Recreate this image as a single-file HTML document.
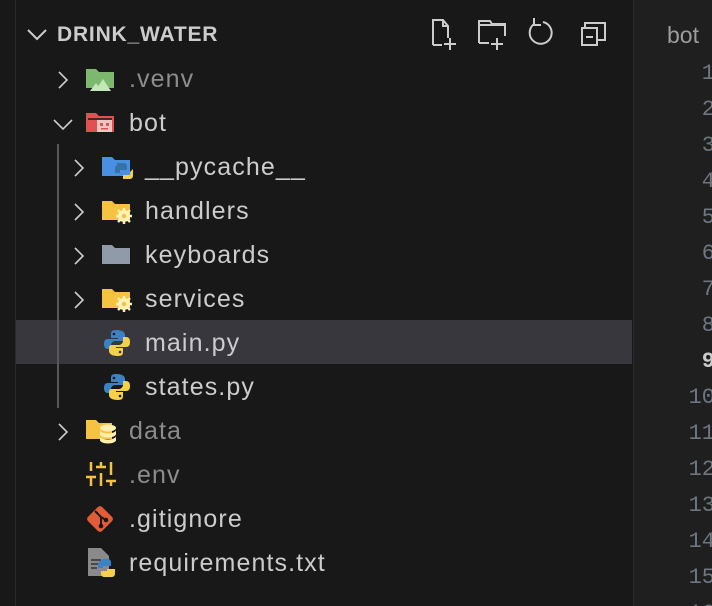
<!DOCTYPE html>
<html><head><style>
body{margin:0;width:712px;height:606px;background:#181818;overflow:hidden;font-family:"Liberation Sans",sans-serif;position:relative}
.side{position:absolute;left:0;top:0;width:632px;height:606px;background:#181818}
.lb{position:absolute;left:15px;top:0;width:1px;height:606px;background:#2b2b2b}
.ed{position:absolute;left:633px;top:0;width:79px;height:606px;background:#1f1f1f;border-left:1px solid #2b2b2b}
.row{position:absolute;left:16px;width:616px;height:44px}
.t{position:absolute;top:0;line-height:46px;font-size:25px;letter-spacing:1.1px;color:#cccccc;white-space:nowrap}
.dim{color:#8c8c8c}
.ch{position:absolute;top:14px}
.ln{position:absolute;right:-3px;font-family:"Liberation Mono",monospace;font-size:22px;line-height:24px;color:#6e7681;text-align:right}
</style></head><body>
<div class="side"></div>
<div class="lb"></div>
<div class="row" style="top:320px;background:#37373d"></div>
<div style="position:absolute;left:57px;top:144px;width:2px;height:264px;background:#585858"></div>
<svg style="position:absolute;left:26px;top:26px" width="22" height="16"><path d="M2 4 L11 13 L20 4" stroke="#ccc" stroke-width="2" fill="none"/></svg>
<div style="position:absolute;left:57px;top:21px;font-size:21px;letter-spacing:0.8px;font-weight:bold;color:#cccccc;line-height:28px">DRINK_WATER</div>
<svg style="position:absolute;left:430px;top:18px" width="200" height="34" fill="none" stroke="#ccc" stroke-width="2">
<path d="M3 27 V2 H13 L18 8 V20 M13 2 V8 H18 M3 27 H12 M20 20 V32 M14 26 H26"/>
<path d="M49 25 V3 H60 L62 6 H75 V18 M49 7 H75 M49 25 H59 M67 20 V32 M61 26 H73"/>
<path d="M104 6 A11 11 0 1 0 113 4"/>
<path d="M104 0 V7 H111"/>
<path d="M152 10 V27 H167 V10 Z M155 10 V5 H175 V22 H167 M156 19 H163"/>
</svg>
<svg class="ch" style="left:56px;top:70px" width="14" height="20"><path d="M3 2 L11 10 L3 18" stroke="#ccc" stroke-width="1.6" fill="none"/></svg>
<svg style="position:absolute;left:86px;top:67px" width="30" height="24"><path d="M0 2 H10 L13 5 H28 V21 H0 Z" fill="#7cb86e"/><path d="M9 24 L17 12 L25 24 Z M4 24 L10 16 L16 24Z" fill="#c5e6b8"/></svg>
<div class="t dim" style="left:129px;top:56px">.venv</div>

<svg class="ch" style="left:52px;top:117px" width="22" height="16"><path d="M2 3 L11 12 L20 3" stroke="#ccc" stroke-width="1.6" fill="none"/></svg>
<svg style="position:absolute;left:86px;top:111px" width="31" height="24"><path d="M0 2 H10 L13 5 H28 V21 H0 Z" fill="#e05252"/><path d="M2 8 H26" stroke="#181818" stroke-width="1.5"/><rect x="11" y="9" width="15" height="12" fill="#f2c4c4"/><rect x="14" y="12" width="3" height="3" fill="#e05252"/><rect x="20" y="12" width="3" height="3" fill="#e05252"/><rect x="15" y="17" width="7" height="1.5" fill="#e05252"/></svg>
<div class="t" style="left:129px;top:100px">bot</div>

<svg class="ch" style="left:72px;top:158px" width="14" height="20"><path d="M3 2 L11 10 L3 18" stroke="#ccc" stroke-width="1.6" fill="none"/></svg>
<svg style="position:absolute;left:102px;top:155px" width="31" height="26"><path d="M0 2 H10 L13 5 H28 V21 H0 Z" fill="#4a90e2"/><path d="M14 8 h8 a3 3 0 0 1 3 3 v4 h-7 v3 h-5 v-5 a3 3 0 0 1 3-3z" fill="#3572a5"/><path d="M31 14 v7 a3 3 0 0 1 -3 3 h-7 v-4 h7 v-3z" fill="#f4d04b"/></svg>
<div class="t" style="left:145px;top:144px">__pycache__</div>

<svg class="ch" style="left:72px;top:202px" width="14" height="20"><path d="M3 2 L11 10 L3 18" stroke="#ccc" stroke-width="1.6" fill="none"/></svg>
<svg style="position:absolute;left:102px;top:199px" width="31" height="26"><path d="M0 2 H10 L13 5 H28 V21 H0 Z" fill="#f5c242"/><circle cx="22" cy="17" r="6" fill="#fff2b3"/><path d="M22 9 V25 M14 17 H30 M16 11 L28 23 M28 11 L16 23" stroke="#fff2b3" stroke-width="2.5"/><circle cx="22" cy="17" r="2.2" fill="#f5c242"/></svg>
<div class="t" style="left:145px;top:188px">handlers</div>

<svg class="ch" style="left:72px;top:246px" width="14" height="20"><path d="M3 2 L11 10 L3 18" stroke="#ccc" stroke-width="1.6" fill="none"/></svg>
<svg style="position:absolute;left:102px;top:243px" width="31" height="26"><path d="M0 2 H10 L13 5 H28 V21 H0 Z" fill="#8f9ba8"/></svg>
<div class="t" style="left:145px;top:232px">keyboards</div>

<svg class="ch" style="left:72px;top:290px" width="14" height="20"><path d="M3 2 L11 10 L3 18" stroke="#ccc" stroke-width="1.6" fill="none"/></svg>
<svg style="position:absolute;left:102px;top:287px" width="31" height="26"><path d="M0 2 H10 L13 5 H28 V21 H0 Z" fill="#f5c242"/><circle cx="22" cy="17" r="6" fill="#fff2b3"/><path d="M22 9 V25 M14 17 H30 M16 11 L28 23 M28 11 L16 23" stroke="#fff2b3" stroke-width="2.5"/><circle cx="22" cy="17" r="2.2" fill="#f5c242"/></svg>
<div class="t" style="left:145px;top:276px">services</div>

<svg style="position:absolute;left:103px;top:329px" width="28" height="28"><path d="M13 1 C8 1 8 3 8 6 v3 h7 v1 H5 C2 10 1 12 1 15 c0 3 1 5 4 5 h3 v-4 c0-2 2-4 4-4 h7 c2 0 3-1 3-3 V6 c0-3-3-5-9-5z" fill="#3b82c4"/><path d="M15 27 c5 0 5-2 5-5 v-3 h-7 v-1 h10 c3 0 4-2 4-5 c0-3-1-5-4-5 h-3 v4 c0 2-2 4-4 4 h-7 c-2 0-3 1-3 3 v3 c0 3 3 5 9 5z" fill="#f4d04b"/><circle cx="11" cy="5" r="1.3" fill="#181818"/><circle cx="17" cy="23" r="1.3" fill="#37373d"/></svg>
<div class="t" style="left:145px;top:320px">main.py</div>

<svg style="position:absolute;left:103px;top:373px" width="28" height="28"><path d="M13 1 C8 1 8 3 8 6 v3 h7 v1 H5 C2 10 1 12 1 15 c0 3 1 5 4 5 h3 v-4 c0-2 2-4 4-4 h7 c2 0 3-1 3-3 V6 c0-3-3-5-9-5z" fill="#3b82c4"/><path d="M15 27 c5 0 5-2 5-5 v-3 h-7 v-1 h10 c3 0 4-2 4-5 c0-3-1-5-4-5 h-3 v4 c0 2-2 4-4 4 h-7 c-2 0-3 1-3 3 v3 c0 3 3 5 9 5z" fill="#f4d04b"/><circle cx="11" cy="5" r="1.3" fill="#181818"/><circle cx="17" cy="23" r="1.3" fill="#181818"/></svg>
<div class="t" style="left:145px;top:364px">states.py</div>

<svg class="ch" style="left:56px;top:422px" width="14" height="20"><path d="M3 2 L11 10 L3 18" stroke="#ccc" stroke-width="1.6" fill="none"/></svg>
<svg style="position:absolute;left:86px;top:418px" width="31" height="28"><path d="M0 2 H10 L13 5 H26 V21 H0 Z" fill="#f5c242"/><ellipse cx="22" cy="10" rx="8" ry="3.5" fill="#fff0b0"/><path d="M14 12 v4 a8 3.5 0 0 0 16 0 v-4 a8 3.5 0 0 1 -16 0z M14 18 v4 a8 3.5 0 0 0 16 0 v-4 a8 3.5 0 0 1 -16 0z" fill="#fff0b0"/></svg>
<div class="t dim" style="left:129px;top:408px">data</div>

<svg style="position:absolute;left:86px;top:462px" width="30" height="26" stroke="#f5c242" stroke-width="2.5" fill="none"><path d="M5 0 V9 M5 15 V24 M0 15 H10 M15 0 V5 M15 11 V24 M10 5 H20 M25 0 V13 M25 19 V24 M20 19 H30"/></svg>
<div class="t dim" style="left:129px;top:452px">.env</div>

<svg style="position:absolute;left:85px;top:504px" width="30" height="30"><rect x="5" y="5" width="20" height="20" rx="3" transform="rotate(45 15 15)" fill="#e05d35"/><path d="M10 7 L16 13 V22 M16 13 L21 16" stroke="#181818" stroke-width="2" fill="none"/><circle cx="16" cy="22" r="2.3" fill="#181818"/><circle cx="21" cy="16" r="2.3" fill="#181818"/></svg>
<div class="t" style="left:129px;top:496px">.gitignore</div>

<svg style="position:absolute;left:87px;top:548px" width="30" height="30"><path d="M1 0 H14 L22 8 V28 H1 Z" fill="#8a8a8a"/><path d="M4 12 H14 M4 16 H12 M4 20 H10" stroke="#333" stroke-width="1.5"/><path d="M16 11 h5 a3 3 0 0 1 3 3 v4 h-8 v2 h-5 v-4 a3 3 0 0 1 3-3 z" fill="#3b82c4"/><path d="M20 29 h5 a3 3 0 0 0 3-3 v-5 h-8 v2 h-6 v3 a3 3 0 0 0 3 3z" fill="#f4d04b"/></svg>
<div class="t" style="left:129px;top:540px">requirements.txt</div>

<div class="ed"></div>
<div style="position:absolute;left:667px;top:21px;font-size:23px;color:#9d9d9d;line-height:28px">bot</div>
<div style="position:absolute;left:633px;top:0;width:79px;height:606px;overflow:hidden">
<div class="ln" style="top:62px">1</div><div class="ln" style="top:98px">2</div><div class="ln" style="top:134px">3</div><div class="ln" style="top:170px">4</div><div class="ln" style="top:206px">5</div><div class="ln" style="top:242px">6</div><div class="ln" style="top:278px">7</div><div class="ln" style="top:314px">8</div><div class="ln" style="top:350px;color:#ccc;font-weight:bold">9</div><div class="ln" style="top:386px">10</div><div class="ln" style="top:422px">11</div><div class="ln" style="top:458px">12</div><div class="ln" style="top:494px">13</div><div class="ln" style="top:530px">14</div><div class="ln" style="top:566px">15</div><div class="ln" style="top:602px">16</div>
</div>
</body></html>
